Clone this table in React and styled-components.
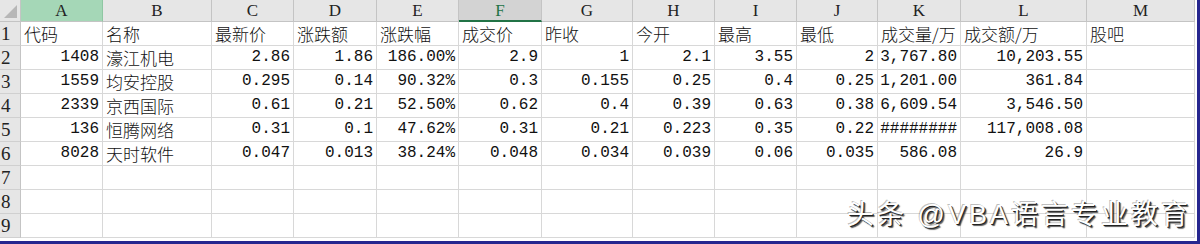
import React from 'react';
import styled, { createGlobalStyle } from 'styled-components';

const GlobalStyle = createGlobalStyle`
  html, body {
    margin: 0;
    padding: 0;
    background: #ffffff;
  }
`;

// column widths, row header first, then A..M
const COLS = [21, 82, 109, 82, 83, 82, 83, 91, 82, 82, 81, 83, 126, 108];
const LETTERS = ['A', 'B', 'C', 'D', 'E', 'F', 'G', 'H', 'I', 'J', 'K', 'L', 'M'];

const ROWS = [
  ['代码', '名称', '最新价', '涨跌额', '涨跌幅', '成交价', '昨收', '今开', '最高', '最低', '成交量/万', '成交额/万', '股吧'],
  ['1408', '濠江机电', '2.86', '1.86', '186.00%', '2.9', '1', '2.1', '3.55', '2', '3,767.80', '10,203.55', ''],
  ['1559', '均安控股', '0.295', '0.14', '90.32%', '0.3', '0.155', '0.25', '0.4', '0.25', '1,201.00', '361.84', ''],
  ['2339', '京西国际', '0.61', '0.21', '52.50%', '0.62', '0.4', '0.39', '0.63', '0.38', '6,609.54', '3,546.50', ''],
  ['136', '恒腾网络', '0.31', '0.1', '47.62%', '0.31', '0.21', '0.223', '0.35', '0.22', '########', '117,008.08', ''],
  ['8028', '天时软件', '0.047', '0.013', '38.24%', '0.048', '0.034', '0.039', '0.06', '0.035', '586.08', '26.9', ''],
];

const TOTAL_ROWS = 9;

const Frame = styled.div`
  position: relative;
  width: 1200px;
  height: 244px;
  box-sizing: border-box;
  border-right: 3px solid #26268f;
  border-bottom: 3px solid #26268f;
  overflow: hidden;
  background: #fff;
`;

const Sheet = styled.div`
  display: grid;
  grid-template-columns: ${COLS.map((w) => w + 'px').join(' ')};
  grid-template-rows: 22px repeat(${TOTAL_ROWS}, 24px);
`;

const Corner = styled.div`
  position: relative;
  background: #e6e6e6;
  border-right: 1px solid #c4c4c4;
  border-bottom: 1px solid #c4c4c4;
  box-sizing: border-box;

  &::after {
    content: '';
    position: absolute;
    right: 3px;
    bottom: 3px;
    width: 0;
    height: 0;
    border-left: 13px solid transparent;
    border-bottom: 13px solid #b7b7b7;
  }
`;

const ColHead = styled.div`
  box-sizing: border-box;
  display: flex;
  align-items: center;
  justify-content: center;
  font-family: 'Liberation Serif', serif;
  font-size: 17px;
  background: ${(p) => (p.$selected ? '#a5d7b7' : p.$active ? '#d3d3d3' : '#e6e6e6')};
  color: ${(p) => (p.$active ? '#217346' : '#222')};
  border-right: 1px solid ${(p) => (p.$selected ? '#8fc7a3' : '#c4c4c4')};
  border-bottom: ${(p) => (p.$active ? '2px solid #217346' : '1px solid #c4c4c4')};
  padding-top: 1px;
`;

const RowHead = styled.div`
  box-sizing: border-box;
  display: flex;
  align-items: flex-end;
  padding: 0 0 1px 1px;
  font-family: 'Liberation Serif', serif;
  font-size: 19px;
  line-height: 21px;
  color: #222;
  background: #e6e6e6;
  border-right: 1px solid #c4c4c4;
  border-bottom: 1px solid #d0d0d0;
  white-space: nowrap;
`;

const Cell = styled.div`
  box-sizing: border-box;
  display: flex;
  align-items: flex-end;
  justify-content: ${(p) => (p.$num ? 'flex-end' : 'flex-start')};
  padding: 0 3px 1px 3px;
  font-family: 'Liberation Mono', 'Noto Sans CJK SC', monospace;
  font-size: 16px;
  line-height: 21px;
  color: #111;
  border-right: 1px solid #d8d8d8;
  border-bottom: 1px solid #d8d8d8;
  overflow: hidden;
  white-space: nowrap;
`;

const CjkText = styled.span`
  font-family: 'Noto Sans CJK SC', sans-serif;
  font-size: 17px;
  line-height: 21px;
  font-weight: 300;
`;

const Watermark = styled.div`
  position: absolute;
  right: 6px;
  bottom: 11px;
  font-family: 'Liberation Sans', 'Noto Sans CJK SC', sans-serif;
  font-size: 27px;
  line-height: 30px;
  letter-spacing: 3px;
  color: #ffffff;
  text-shadow: 1px 1px 0 #222, 2px 2px 1px rgba(0, 0, 0, 0.65), -1px -1px 0 rgba(0, 0, 0, 0.25);
  white-space: nowrap;
`;

const isNum = (v) => /^[\d.,%#]+$/.test(v);
const hasCjk = (v) => /[\u4e00-\u9fff]/.test(v);

const App = () => {
  const body = [];
  for (let r = 0; r < TOTAL_ROWS; r++) {
    const data = ROWS[r] || [];
    body.push(<RowHead key={'h' + r}>{r + 1}</RowHead>);
    LETTERS.forEach((l, c) => {
      const v = data[c] || '';
      body.push(
        <Cell key={r + '-' + l} $num={isNum(v)}>
          {hasCjk(v) ? <CjkText>{v}</CjkText> : v}
        </Cell>
      );
    });
  }

  return (
    <>
      <GlobalStyle />
      <Frame>
        <Sheet>
          <Corner />
          {LETTERS.map((l) => (
            <ColHead key={l} $selected={l === 'A'} $active={l === 'F'}>
              {l}
            </ColHead>
          ))}
          {body}
        </Sheet>
        <Watermark>头条 @VBA语言专业教育</Watermark>
      </Frame>
    </>
  );
};

export default App;
